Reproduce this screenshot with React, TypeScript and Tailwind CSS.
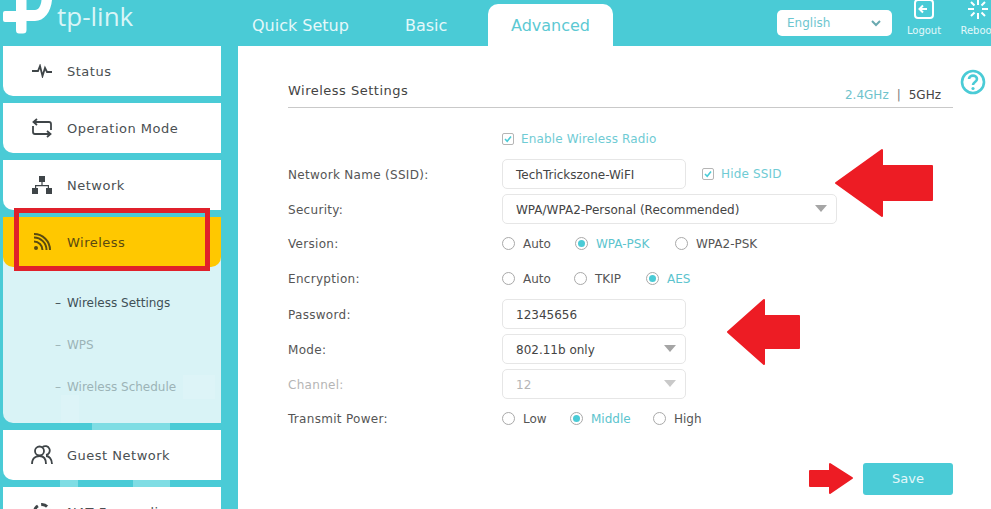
import { ReactNode } from 'react';

const font = "[font-family:'DejaVu_Sans',sans-serif]";

function Logo() {
    return (
        <div className="flex items-start h-full w-[238px] overflow-hidden shrink-0">
            <svg width="56" height="36" viewBox="0 0 56 36" className="shrink-0" fill="#ffffff">
                <path d="M5 11 H16 V0 H26.500 V10 H35 C38.500 10 41 6 41.500 0 H52 C51 12 44 21 35 21 H26.500 V30 Q26.500 33.500 23 33.500 H19 Q16 33.500 16 30 V22 H5 Q3 22 3 20 V13 Q3 11 5 11 Z" />
            </svg>
            <span className="text-[26px] leading-[30px] mt-[1px] text-[#d9f5f7] [font-family:'Open_Sans',sans-serif] ml-[1px]">tp-link</span>
        </div>
    );
}

function SideItem({ icon, label, active }: { icon: ReactNode; label: string; active?: boolean }) {
    return (
        <div className={`flex items-center shrink-0 h-[50px] w-[218px] ml-[3px] rounded-bl-[10px] ${active ? 'bg-[#ffc800] text-[#5a4a10] rounded-br-[10px]' : 'bg-white text-[#4a4f52]'}`}>
            <div className="w-[64px] pl-[19px] pr-[5px] flex justify-center shrink-0">{icon}</div>
            <span className="pt-[2px] text-[13px] tracking-[0.5px] whitespace-nowrap">{label}</span>
        </div>
    );
}

function Row({ label, muted, low, children }: { label?: string; muted?: boolean; low?: boolean; children: ReactNode }) {
    return (
        <div className="flex items-center h-[35px]">
            <div className={`w-[214px] shrink-0 text-[12px] tracking-[0.3px] ${low ? 'pt-[2px]' : ''} ${muted ? 'text-[#b5b5b5]' : 'text-[#555]'}`}>{label}</div>
            {children}
        </div>
    );
}

function Radio({ label, on, w }: { label: string; on?: boolean; w: string }) {
    return (
        <div className={`flex items-center ${w}`}>
            <span className="w-[13px] h-[13px] rounded-full border border-[#a9a9a9] flex items-center justify-center shrink-0">
                {on && <span className="w-[7px] h-[7px] rounded-full bg-[#4acbd6]" />}
            </span>
            <span className={`ml-[8px] text-[12px] ${on ? 'text-[#5cc4ce]' : 'text-[#555]'}`}>{label}</span>
        </div>
    );
}

function Check({ label }: { label: string }) {
    return (
        <div className="flex items-center">
            <span className="w-[12px] h-[12px] border border-[#b5b5b5] rounded-[2px] flex items-center justify-center">
                <svg width="8" height="8" viewBox="0 0 8 8" fill="none" stroke="#4acbd6" strokeWidth="1.6">
                    <path d="M1 4 L3.2 6.2 L7 1.6" />
                </svg>
            </span>
            <span className="ml-[7px] text-[12px] tracking-[0.15px] text-[#6fcbd4]">{label}</span>
        </div>
    );
}

function Field({ value, select, disabled, wide }: { value: string; select?: boolean; disabled?: boolean; wide?: boolean }) {
    return (
        <div className={`flex items-center justify-between h-[30px] ${wide ? 'w-[335px]' : 'w-[184px]'} border border-[#e6e6e6] rounded-[5px] pl-[13px] pr-[9px] text-[12px] ${disabled ? 'text-[#b5b5b5]' : 'text-[#444]'}`}>
            <span className="pt-[2px]">{value}</span>
            {select && <span className={`w-0 h-0 border-x-[6px] border-x-transparent border-t-[7px] ${disabled ? 'border-t-[#c9c9c9]' : 'border-t-[#a5a5a5]'}`} />}
        </div>
    );
}

const icons = {
    status: (
        <svg width="20" height="14" viewBox="0 0 20 14" fill="none" stroke="#3f4548" strokeWidth="1.8">
            <path d="M0 7 H6 L8 2 L10.500 12 L13 4 L15 8 H20" />
        </svg>
    ),
    mode: (
        <svg width="20" height="20" viewBox="0 0 20 20" fill="none" stroke="#3f4548" strokeWidth="1.8">
            <path d="M5 1 L1.500 4 L5 7 M2 4 H17 Q19 4 19 6 V12 M15 13 L18.500 16 L15 19 M18 16 H3 Q1 16 1 14 V8" />
        </svg>
    ),
    network: (
        <svg width="20" height="18" viewBox="0 0 20 18" fill="#3f4548">
            <rect x="7" y="0" width="6" height="6" />
            <rect x="0" y="12" width="6" height="6" />
            <rect x="14" y="12" width="6" height="6" />
            <path d="M9.4 6h1.2v3H17v3h-1.2v-1.8H4.2V12H3V9h6.4z" />
        </svg>
    ),
    wireless: (
        <svg width="18" height="18" viewBox="0 0 18 18" fill="none" stroke="#5a4a10" strokeWidth="2">
            <circle cx="3" cy="15" r="2" fill="#5a4a10" stroke="none" />
            <path d="M1 8.500 A8.500 8.500 0 0 1 9.500 17 M1 4.500 A12.500 12.500 0 0 1 13.500 17 M1 1 A16 16 0 0 1 17 17" />
        </svg>
    ),
    guest: (
        <svg width="22" height="20" viewBox="0 0 22 20" fill="none" stroke="#3f4548" strokeWidth="1.8">
            <circle cx="8.500" cy="6" r="4.500" />
            <path d="M11.500 2 A4.500 4.500 0 1 1 15 10 M1 19 C1 13 5 11 8.500 11 C12 11 15 13 15 19 M15 11 C18 11 21 14 21 19" />
        </svg>
    ),
};

export default function App() {
    return (
        <div className={`relative w-[991px] h-[509px] overflow-hidden bg-white ${font}`}>
            {/* Top bar */}
            <header className="flex h-[46px] bg-[#4acbd6]">
                <Logo />
                <nav className="flex items-end shrink-0 w-[539px] text-[16px] text-[#e4f8fa]">
                    <span className="ml-[14px] w-[153px] h-[42px] leading-[44px]">Quick Setup</span>
                    <span className="w-[83px] h-[42px] leading-[44px]">Basic</span>
                    <span className="w-[125px] h-[42px] leading-[44px] bg-white rounded-t-[10px] text-[#5cc9d3] text-center">Advanced</span>
                </nav>
                <div className="mt-[10px] shrink-0 w-[115px] h-[26px] bg-white rounded-[5px] flex items-center justify-between pl-[10px] pr-[11px] text-[12px] text-[#6dc6cf]">
                    <span>English</span>
                    <svg width="10" height="7" viewBox="0 0 10 7" fill="none" stroke="#6aa9b0" strokeWidth="2">
                        <path d="M1 1 L5 5 L9 1" />
                    </svg>
                </div>
                <div className="ml-[7px] w-[50px] shrink-0 flex flex-col items-center text-[10px] text-[#e4f8fa]">
                    <svg width="20" height="21" viewBox="0 0 20 21" fill="none" stroke="#ffffff" strokeWidth="2" className="-mt-[1px]">
                        <path d="M4 1 H16 Q19 1 19 4 V16 Q19 19 16 19 H4 Q1 19 1 16 V4 Q1 1 4 1 M13 10 H6 M9 6.500 L5.500 10 L9 13.500" />
                    </svg>
                    <span className="leading-[12px] mt-[5px]">Logout</span>
                </div>
                <div className="ml-[4px] w-[50px] shrink-0 flex flex-col items-center text-[10px] text-[#e4f8fa]">
                    <svg width="24" height="21" viewBox="0 0 24 21" fill="none" stroke="#ffffff" strokeWidth="2" className="-mt-[1px]">
                        <path d="M12 0 V6 M12 14 V20 M2 10 H8 M16 10 H22 M5 3 L8.500 6.500 M15.500 13.500 L19 17 M19 3 L15.500 6.500 M8.500 13.500 L5 17" />
                    </svg>
                    <span className="leading-[12px] mt-[5px] whitespace-nowrap">Reboot</span>
                </div>
            </header>

            <div className="flex h-[463px]">
                {/* Sidebar */}
                <aside className="relative w-[238px] shrink-0 bg-[#4acbd6] flex flex-col gap-[7px]">
                    {/* faint logo watermark showing through the gaps */}
                    <div className="absolute left-[92px] top-[377px] w-[78px] h-[7px] bg-[#7fdde4]" />
                    <div className="absolute left-[60px] top-[434px] w-[18px] h-[7px] bg-[#7fdde4]" />
                    <div className="absolute left-[133px] top-[434px] w-[37px] h-[7px] bg-[#7fdde4]" />
                    <SideItem icon={icons.status} label="Status" />
                    <SideItem icon={icons.mode} label="Operation Mode" />
                    <SideItem icon={icons.network} label="Network" />
                    <div className="relative w-[218px] shrink-0 ml-[3px] rounded-bl-[10px] bg-[#d9f3f6]">
                        <div className="-ml-[3px]">
                            <SideItem icon={icons.wireless} label="Wireless" active />
                        </div>
                        <ul className="h-[156px] pt-[14px] flex flex-col text-[12px]">
                            <li className="h-[42px] flex items-center pt-[2px] pl-[52px] text-[#3f5056]"><span className="w-[12px]">–</span>Wireless Settings</li>
                            <li className="h-[42px] flex items-center pt-[2px] pl-[52px] text-[#9cb3b7]"><span className="w-[12px]">–</span>WPS</li>
                            <li className="h-[42px] flex items-center pt-[2px] pl-[52px] text-[#9cb3b7]"><span className="w-[12px]">–</span>Wireless Schedule</li>
                        </ul>
                        <div className="absolute left-[58px] bottom-0 w-[18px] h-[28px] bg-white/10" />
                        <div className="absolute left-[180px] bottom-[24px] w-[32px] h-[24px] bg-white/10" />
                    </div>
                    <SideItem icon={icons.guest} label="Guest Network" />
                    <SideItem icon={<span className="w-[18px] h-[18px] rounded-full border-[3px] border-dashed border-[#3f4548]" />} label="NAT Forwarding" />
                </aside>

                {/* Main panel */}
                <main className="flex-1 pl-[50px] pr-[38px] pt-[32px] relative">
                    <div className="flex items-end justify-between h-[30px] border-b border-[#c9c9c9]">
                        <span className="mb-[7px] text-[13px] text-[#444] tracking-[0.5px]">Wireless Settings</span>
                        <span className="mb-[3px] text-[12px] pr-[12px] text-[#444]">
                            <span className="text-[#6fc3cc]">2.4GHz</span>
                            <span className="mx-[8px] text-[#777]">|</span>
                            5GHz
                        </span>
                    </div>
                    <div className="mt-[13px]">
                        <Row><Check label="Enable Wireless Radio" /></Row>
                        <Row low label="Network Name (SSID):">
                            <Field value="TechTrickszone-WiFI" />
                            <div className="ml-[16px]"><Check label="Hide SSID" /></div>
                        </Row>
                        <Row low label="Security:"><Field value="WPA/WPA2-Personal (Recommended)" select wide /></Row>
                        <Row label="Version:">
                            <Radio label="Auto" w="w-[73px]" />
                            <Radio label="WPA-PSK" on w="w-[100px]" />
                            <Radio label="WPA2-PSK" w="w-[100px]" />
                        </Row>
                        <Row label="Encryption:">
                            <Radio label="Auto" w="w-[72px]" />
                            <Radio label="TKIP" w="w-[72px]" />
                            <Radio label="AES" on w="w-[60px]" />
                        </Row>
                        <Row low label="Password:"><Field value="12345656" /></Row>
                        <Row low label="Mode:"><Field value="802.11b only" select /></Row>
                        <Row low label="Channel:" muted><Field value="12" select disabled /></Row>
                        <Row label="Transmit Power:">
                            <Radio label="Low" w="w-[68px]" />
                            <Radio label="Middle" on w="w-[83px]" />
                            <Radio label="High" w="w-[60px]" />
                        </Row>
                    </div>
                    <div className="flex justify-end mt-[27px]">
                        <button className="w-[90px] h-[32px] bg-[#4acbd6] rounded-[3px] text-[13px] text-[#e4f8fa]">Save</button>
                    </div>
                </main>
            </div>

            {/* Help icon */}
            <svg width="26" height="26" viewBox="0 0 26 26" fill="none" className="absolute left-[960px] top-[69px]">
                <circle cx="13" cy="13" r="11" stroke="#4acbd6" strokeWidth="2.6" />
                <path d="M9 10 C9 5.500 17 5.500 17 10 C17 13 13 13 13 16" stroke="#4acbd6" strokeWidth="2.6" />
                <circle cx="13" cy="19.500" r="1.6" fill="#4acbd6" />
            </svg>

            {/* Annotations drawn on the screenshot */}
            <div className="absolute left-[14px] top-[208px] w-[196px] h-[63px] border-[5px] border-[#e0202a]" />
            <svg width="991" height="509" className="absolute left-0 top-0 pointer-events-none" fill="#ed1c24" stroke="#ed1c24" strokeWidth="2" strokeLinejoin="round">
                <path d="M836 183 L882 150 V166 H932 V200 H882 V216 Z" />
                <path d="M728 332 L764 300 V316 H799 V348 H764 V364 Z" />
                <path d="M852 478 L830 464 V471 H810 V486 H830 V493 Z" />
            </svg>
        </div>
    );
}
